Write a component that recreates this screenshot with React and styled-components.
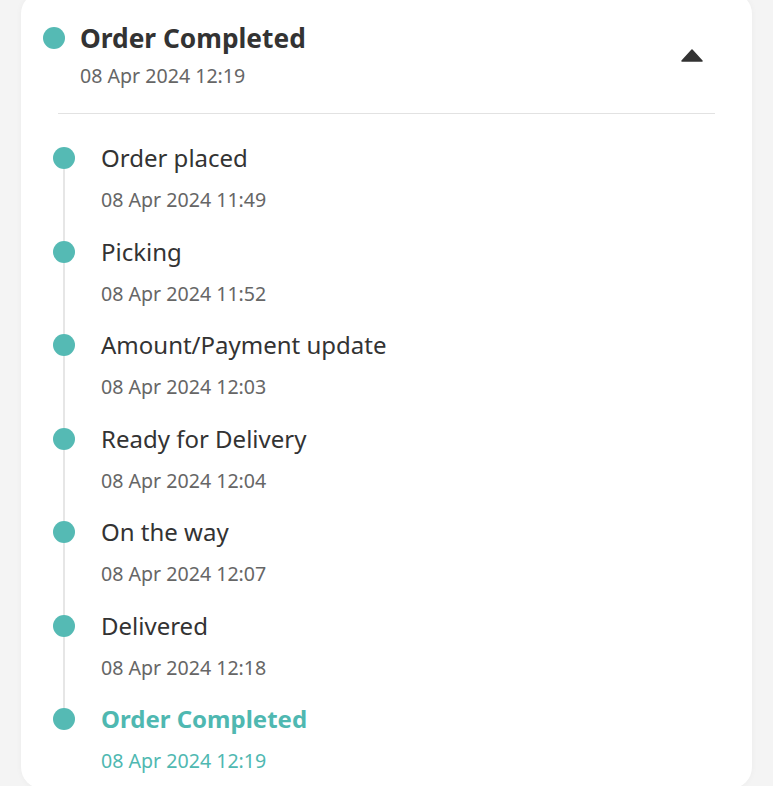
import React from 'react';
import styled, { createGlobalStyle } from 'styled-components';

const GlobalStyle = createGlobalStyle`
	html, body {
		margin: 0;
		padding: 0;
		background: #f4f4f4;
		overflow: hidden;
	}
	body {
		font-family: 'Noto Sans', 'Open Sans', sans-serif;
	}
`;

const events = [
	{ id: 1, text: 'Order placed', time: '08 Apr 2024 11:49' },
	{ id: 2, text: 'Picking', time: '08 Apr 2024 11:52' },
	{ id: 3, text: 'Amount/Payment update', time: '08 Apr 2024 12:03' },
	{ id: 4, text: 'Ready for Delivery', time: '08 Apr 2024 12:04' },
	{ id: 5, text: 'On the way', time: '08 Apr 2024 12:07' },
	{ id: 6, text: 'Delivered', time: '08 Apr 2024 12:18' },
	{ id: 7, text: 'Order Completed', time: '08 Apr 2024 12:19' },
];

const Caret = () => (
	<svg width='22' height='13' viewBox='0 0 22 13'>
		<path d='M11 1 L21 12 L1 12 Z' fill='#333' stroke='#333' strokeWidth='1.5' strokeLinejoin='round' />
	</svg>
);

const App = () => {
	return (
		<>
			<GlobalStyle />
			<Card>
				<Header>
					<HeaderDot />
					<HeaderText>
						<HeaderTitle>Order Completed</HeaderTitle>
						<HeaderDate>08 Apr 2024 12:19</HeaderDate>
					</HeaderText>
					<Toggle type='button'>
						<Caret />
					</Toggle>
				</Header>
				<Divider />
				<Timeline>
					{events.map((ev, i) => {
						const last = i === events.length - 1;
						return (
							<Item key={ev.id} $last={last}>
								<Rail $last={last}>
									<Dot />
									{!last && <Line />}
								</Rail>
								<ItemText>
									<ItemTitle $active={last}>{ev.text}</ItemTitle>
									<ItemDate $active={last}>{ev.time}</ItemDate>
								</ItemText>
							</Item>
						);
					})}
				</Timeline>
			</Card>
		</>
	);
};

const Card = styled.div`
	box-sizing: border-box;
	width: 731px;
	margin: -8px 0 0 21px;
	padding: 29px 0 0;
	background: #fff;
	border-radius: 22px;
	box-shadow: 0 0 6px rgba(0, 0, 0, 0.04);
`;

const Header = styled.div`
	display: flex;
	align-items: center;
	padding: 0 49px 0 22px;
`;

const HeaderDot = styled.span`
	align-self: flex-start;
	width: 22px;
	height: 22px;
	margin-top: 6px;
	border-radius: 50%;
	background: #55bab4;
	flex-shrink: 0;
`;

const HeaderText = styled.div`
	flex: 1;
	margin-left: 15px;
	display: flex;
	flex-direction: column;
	gap: 8px;
`;

const HeaderTitle = styled.div`
	font-size: 26.3px;
	line-height: 34px;
	font-weight: 700;
	color: #333;
`;

const HeaderDate = styled.div`
	font-size: 19.6px;
	line-height: 26px;
	font-weight: 400;
	color: #666;
`;

const Toggle = styled.button`
	background: transparent;
	border: none;
	padding: 0;
	display: flex;
	cursor: pointer;
`;

const Divider = styled.hr`
	margin: 24px 37px 0;
	border: none;
	border-top: 1.5px solid #e2e2e2;
`;

const Timeline = styled.ul`
	list-style: none;
	margin: 29px 0 0;
	padding: 0 32px 16px;
`;

const Item = styled.li`
	display: flex;
	gap: 26px;
	padding-bottom: ${(p) => (p.$last ? '0' : '24.5px')};
`;

const Rail = styled.div`
	width: 22px;
	display: flex;
	flex-direction: column;
	align-items: center;
	padding-top: 4px;
	margin-bottom: ${(p) => (p.$last ? '0' : '-28.5px')};
`;

const Dot = styled.span`
	width: 22px;
	height: 22px;
	border-radius: 50%;
	background: #55bab4;
	flex-shrink: 0;
`;

const Line = styled.span`
	flex: 1;
	width: 2px;
	background: #e6e6e6;
`;

const ItemText = styled.div`
	display: flex;
	flex-direction: column;
	gap: 15px;
`;

const ItemTitle = styled.div`
	font-size: 24px;
	line-height: 30px;
	font-weight: ${(p) => (p.$active ? 700 : 400)};
	color: ${(p) => (p.$active ? '#4fb8b1' : '#333')};
`;

const ItemDate = styled.div`
	font-size: 19.6px;
	line-height: 24px;
	font-weight: 400;
	color: ${(p) => (p.$active ? '#4fb8b1' : '#666')};
`;

export default App;
